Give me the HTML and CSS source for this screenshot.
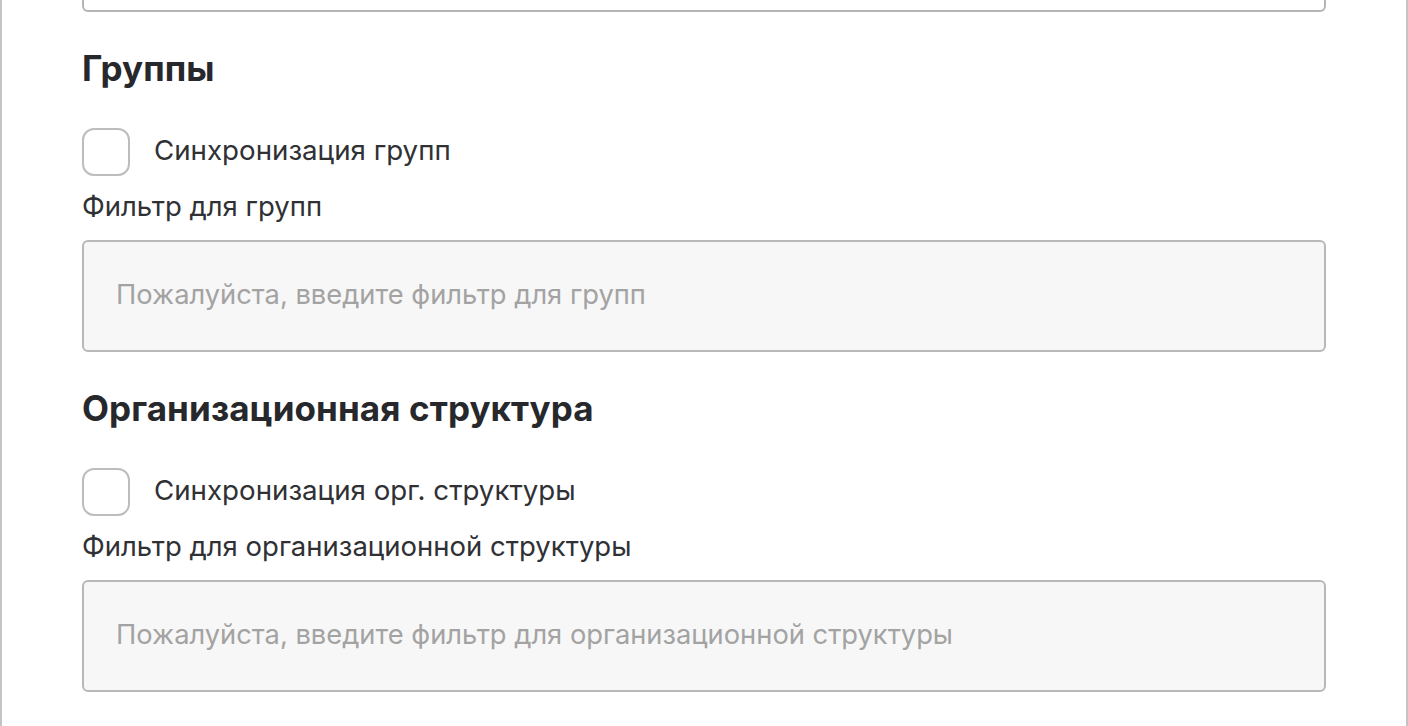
FILE: index.html
```html
<!DOCTYPE html>
<html lang="ru">
<head>
	<meta charset="UTF-8">
	<meta name="viewport" content="width=device-width, initial-scale=1.0">
	<title>Синхронизация</title>
	<link rel="stylesheet" href="styles.css">
</head>
<body>
	<div class="panel">
		<div class="input-tail"></div>

		<section class="group">
			<h2 class="group-title">Группы</h2>
			<label class="check">
				<input type="checkbox" class="check-box">
				<span>Синхронизация групп</span>
			</label>
			<div class="field-label">Фильтр для групп</div>
			<input type="text" class="field" placeholder="Пожалуйста, введите фильтр для групп">
		</section>

		<section class="group">
			<h2 class="group-title">Организационная структура</h2>
			<label class="check">
				<input type="checkbox" class="check-box">
				<span>Синхронизация орг. структуры</span>
			</label>
			<div class="field-label">Фильтр для организационной структуры</div>
			<input type="text" class="field" placeholder="Пожалуйста, введите фильтр для организационной структуры">
		</section>
	</div>
</body>
</html>
```

FILE: styles.css
```css
html, body {
	margin: 0;
	padding: 0;
	background: #fff;
	height: 100%;
}
body {
	font-family: Inter, "Noto Sans", sans-serif;
	color: #2b2d31;
	overflow: hidden;
}
.panel {
	box-sizing: border-box;
	width: 1408px;
	min-height: 100%;
	border-left: 2px solid #c4c4c4;
	border-right: 2px solid #c4c4c4;
	padding: 0 80px 40px 80px;
}
.input-tail {
	height: 10px;
	border: 2px solid #b5b5b5;
	border-top: none;
	border-radius: 0 0 6px 6px;
}
.group {
	display: flex;
	flex-direction: column;
	align-items: flex-start;
}
.group-title {
	margin: 34px 0 2px 0;
	font-size: 35px;
	line-height: 44px;
	font-weight: 700;
	letter-spacing: 0.1px;
	color: #26282c;
}
.check {
	display: flex;
	align-items: center;
	gap: 24px;
	height: 48px;
	margin-top: 36px;
	font-size: 27.7px;
	color: #2f3135;
	cursor: pointer;
}
.check span {
	line-height: 44px;
	padding-bottom: 4px;
}
.check-box {
	appearance: none;
	-webkit-appearance: none;
	box-sizing: border-box;
	width: 48px;
	height: 48px;
	margin: 0;
	border: 2px solid #bdbdbd;
	border-radius: 12px;
	background: #fff;
}
.field-label {
	margin-top: 7px;
	padding-bottom: 2px;
	font-size: 27.5px;
	line-height: 46px;
	color: #2f3135;
}
.field {
	box-sizing: border-box;
	width: 100%;
	height: 112px;
	margin-top: 9px;
	padding: 0 32px 3px;
	border: 2px solid #b8b8b8;
	border-radius: 6px;
	background: #f7f7f7;
	font-family: inherit;
	font-size: 27.3px;
	color: #2f3135;
	outline: none;
}
.field::placeholder {
	color: #a3a3a3;
}
```
